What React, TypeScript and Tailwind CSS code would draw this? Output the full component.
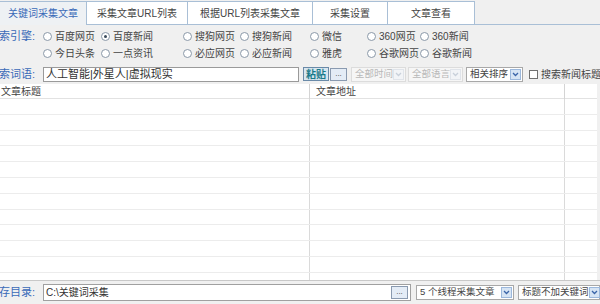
const FONT = "font-['Liberation_Sans','Noto_Sans_CJK_SC',sans-serif]";

const tabs = [
  { label: "关键词采集文章", w: "w-[87px]", active: true },
  { label: "采集文章URL列表", w: "w-[101px]" },
  { label: "根据URL列表采集文章", w: "w-[125px]" },
  { label: "采集设置", w: "w-[75px]" },
  { label: "文章查看", w: "w-[87px]" },
];

const row1 = [
  { label: "百度网页", w: "w-[58px]" },
  { label: "百度新闻", w: "w-[82px]", checked: true },
  { label: "搜狗网页", w: "w-[57px]" },
  { label: "搜狗新闻", w: "w-[70px]" },
  { label: "微信", w: "w-[57px]" },
  { label: "360网页", w: "w-[53px]" },
  { label: "360新闻", w: "w-[60px]" },
];

const row2 = [
  { label: "今日头条", w: "w-[58px]" },
  { label: "一点资讯", w: "w-[82px]" },
  { label: "必应网页", w: "w-[57px]" },
  { label: "必应新闻", w: "w-[70px]" },
  { label: "雅虎", w: "w-[57px]" },
  { label: "谷歌网页", w: "w-[53px]" },
  { label: "谷歌新闻", w: "w-[60px]" },
];

function Radio({ label, w, checked }: { label: string; w: string; checked?: boolean }) {
  return (
    <div className={`${w} shrink-0 flex items-center gap-[3px]`}>
      <span className="w-[9px] h-[9px] rounded-full border border-[#8a98a8] bg-white flex items-center justify-center">
        {checked && <span className="w-[3px] h-[3px] rounded-full bg-[#3a4a5a]" />}
      </span>
      <span className="text-[10px] text-[#444] whitespace-nowrap">{label}</span>
    </div>
  );
}

// labels are clipped at the left edge, as in the window capture
function Label({ text }: { text: string }) {
  return (
    <div className="w-[43px] shrink-0 overflow-hidden">
      <span className="block -ml-[12px] whitespace-nowrap text-[11px] text-[#3a6ab8]">{text}</span>
    </div>
  );
}

function Arrow({ disabled }: { disabled?: boolean }) {
  return (
    <span
      className={`w-[11px] h-[11px] shrink-0 flex items-center justify-center border ${
        disabled ? "border-[#e0e4ea] bg-[#f2f4f7]" : "border-[#9cb8dc] bg-[#d6e4f4]"
      }`}
    >
      <svg width="7" height="5" viewBox="0 0 7 5">
        <path d="M1 1 L3.5 3.5 L6 1" fill="none" stroke={disabled ? "#c8d0da" : "#3a64a8"} strokeWidth="1.3" />
      </svg>
    </span>
  );
}

function Select({ text, w, disabled }: { text: string; w: string; disabled?: boolean }) {
  return (
    <div
      className={`${w} h-[15px] shrink-0 flex items-center justify-between pl-[3px] pr-[1px] border ${
        disabled ? "border-[#dcdcdc] bg-[#f6f6f6] text-[#b8b8b8]" : "border-[#a8a8a8] bg-white text-[#444]"
      } text-[9.5px] whitespace-nowrap`}
    >
      <span>{text}</span>
      <Arrow disabled={disabled} />
    </div>
  );
}

function Dots() {
  return (
    <div className="w-[17px] h-[13px] shrink-0 border border-[#8a9ab0] bg-[#e4ecf6] flex items-end justify-center pb-[2px]">
      <span className="text-[8px] leading-none text-[#444]">...</span>
    </div>
  );
}

export default function App() {
  return (
    <div className={`w-[600px] h-[304px] overflow-hidden bg-[#f0f0f0] flex flex-col ${FONT}`}>
      <div className="h-[25px] flex items-end border-b border-[#a9bfd6] shrink-0">
        {tabs.map((t) => (
          <div
            key={t.label}
            className={`${t.w} flex items-center justify-center border-t border-r border-[#a9bfd6] text-[10px] whitespace-nowrap ${
              t.active ? "bg-[#eef1f4] text-[#3a6ab8] -mb-px h-[24px]" : "bg-white text-[#444] h-[23px]"
            }`}
          >
            {t.label}
          </div>
        ))}
      </div>

      <div className="pt-[4px] flex flex-col shrink-0">
        <div className="h-[15px] flex items-center">
          <Label text="搜索引擎:" />
          {row1.map((r) => (
            <Radio key={r.label} {...r} />
          ))}
        </div>
        <div className="h-[15px] mt-[2px] flex items-center">
          <div className="w-[43px] shrink-0" />
          {row2.map((r) => (
            <Radio key={r.label} {...r} />
          ))}
        </div>
        <div className="h-[16px] mt-[5px] flex items-center">
          <Label text="搜索词语:" />
          <div className="w-[256px] h-[15px] shrink-0 border border-[#9a9a9a] bg-white flex items-center px-[2px] text-[11px] text-[#333] whitespace-nowrap">
            人工智能|外星人|虚拟现实
          </div>
          <div className="ml-[4px] w-[26px] h-[14px] shrink-0 border border-[#6a8aa8] bg-[#d8e6f0] flex items-center justify-center text-[10px] font-bold text-[#1a7a8a]">
            粘贴
          </div>
          <div className="ml-[1px]">
            <Dots />
          </div>
          <div className="ml-[4px]">
            <Select text="全部时间" w="w-[55px]" disabled />
          </div>
          <div className="ml-[2px]">
            <Select text="全部语言" w="w-[55px]" disabled />
          </div>
          <div className="ml-[3px]">
            <Select text="相关排序" w="w-[57px]" />
          </div>
          <div className="ml-[6px] flex items-center gap-[3px]">
            <span className="w-[9px] h-[9px] border border-[#707070] bg-white" />
            <span className="text-[10px] text-[#444] whitespace-nowrap">搜索新闻标题</span>
          </div>
        </div>
      </div>

      <div className="mt-[2px] flex-1 bg-white flex flex-col overflow-hidden mr-[3px]">
        <div className="h-[15px] shrink-0 grid grid-cols-[310px_255px_1fr] border-b border-[#e2e2e2] text-[10px] text-[#444]">
          <div className="border-r border-[#d4d4d4] pl-px flex items-center">文章标题</div>
          <div className="border-r border-[#d4d4d4] pl-[6px] flex items-center">文章地址</div>
          <div />
        </div>
        {Array.from({ length: 12 }).map((_, i) => (
          <div key={i} className="h-[15.8px] shrink-0 grid grid-cols-[310px_255px_1fr] border-b border-[#ececec]">
            <div className="border-r border-[#dadada]" />
            <div className="border-r border-[#dadada]" />
            <div />
          </div>
        ))}
      </div>

      <div className="h-[24px] shrink-0 border-t border-[#c8c8c8] flex items-center">
        <Label text="保存目录:" />
        <div className="w-[368px] h-[17px] shrink-0 border border-[#a0a0a0] bg-white flex items-center justify-between pl-[2px] pr-[2px] text-[10px] text-[#333]">
          <span>C:\关键词采集</span>
          <Dots />
        </div>
        <div className="ml-[5px]">
          <Select text="5 个线程采集文章" w="w-[98px]" />
        </div>
        <div className="ml-[4px]">
          <Select text="标题不加关键词" w="w-[82px]" />
        </div>
      </div>
    </div>
  );
}
